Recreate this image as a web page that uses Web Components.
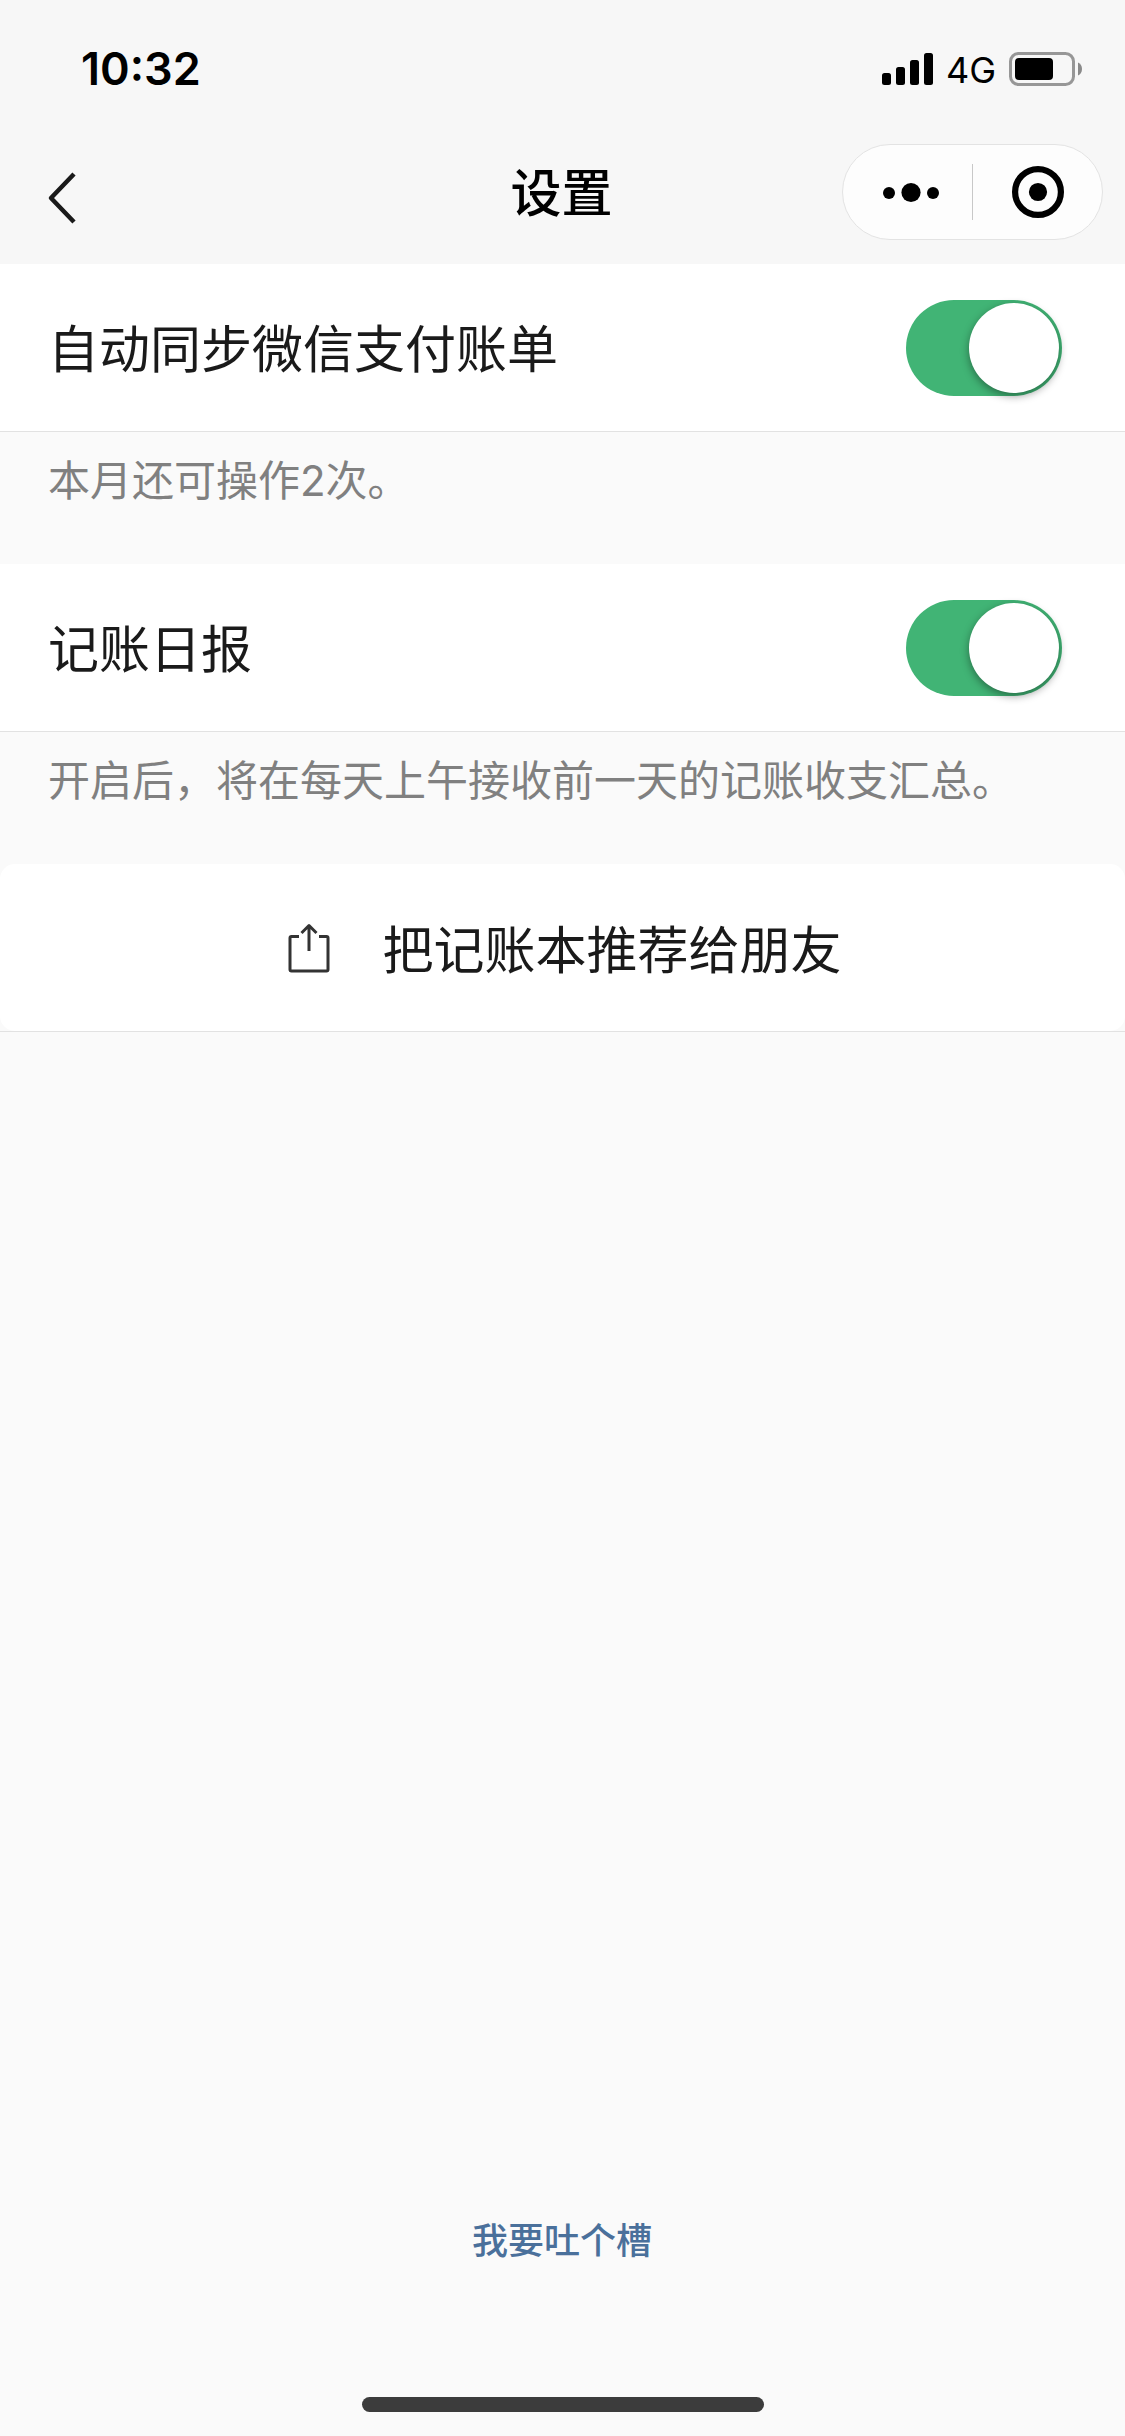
<!DOCTYPE html>
<html lang="zh-CN">
<head>
<meta charset="UTF-8">
<title>设置</title>
<style>
  html, body {
    margin: 0;
    height: 100%;
  }
  body {
    background: #fafafa;
    color: #1a1a1a;
    font-family: "Liberation Sans", "Noto Sans CJK SC", sans-serif;
    overflow: hidden;
  }
</style>
</head>
<body>
  <settings-page>
    <status-bar slot="header" time="10:32" network="4G"></status-bar>
    <nav-bar slot="header">设置</nav-bar>

    <setting-row>自动同步微信支付账单<toggle-switch slot="action" checked></toggle-switch></setting-row>
    <setting-hint>本月还可操作2次。</setting-hint>
    <setting-row>记账日报<toggle-switch slot="action" checked></toggle-switch></setting-row>
    <setting-hint>开启后，将在每天上午接收前一天的记账收支汇总。</setting-hint>
    <share-button>把记账本推荐给朋友</share-button>

    <feedback-link slot="footer">我要吐个槽</feedback-link>
    <home-indicator slot="footer"></home-indicator>
  </settings-page>

<script>
/**
 * SettingsPage
 * Full height column: header, content, footer.
 */
class SettingsPage extends HTMLElement {
  constructor() {
    super();
    this.attachShadow({ mode: "open" });
    this.shadowRoot.innerHTML = `
      <style>
        :host {
          display: flex;
          flex-direction: column;
          height: 2436px;
          background: #fafafa;
        }
        header {
          background: #f7f7f7;
        }
        main {
          flex: 1;
        }
      </style>
      <header><slot name="header"></slot></header>
      <main><slot></slot></main>
      <footer><slot name="footer"></slot></footer>
    `;
  }
}

/**
 * StatusBar
 * Clock on the left, signal, network and battery on the right.
 */
class StatusBar extends HTMLElement {
  constructor() {
    super();
    this.attachShadow({ mode: "open" });
  }

  connectedCallback() {
    const time = this.getAttribute("time") || "";
    const network = this.getAttribute("network") || "";

    this.shadowRoot.innerHTML = `
      <style>
        :host {
          display: flex;
          justify-content: space-between;
          align-items: center;
          box-sizing: border-box;
          height: 132px;
          padding: 6px 42px 0 81px;
          color: #000;
          font-family: Inter, "Liberation Sans", sans-serif;
        }
        .time {
          font-size: 45px;
          font-weight: 600;
          line-height: 60px;
        }
        .right {
          display: flex;
          align-items: center;
        }
        .network {
          margin: 2px 13px 0 13px;
          font-size: 36px;
          line-height: 44px;
        }
        svg {
          display: block;
        }
      </style>
      <span class="time">${time}</span>
      <div class="right">
        <svg width="51" height="34" viewBox="0 0 51 34">
          <rect x="0" y="21" width="9" height="12" rx="2.5"/>
          <rect x="14" y="15" width="9" height="18" rx="2.5"/>
          <rect x="28" y="8" width="9" height="25" rx="2.5"/>
          <rect x="42" y="1" width="9" height="32" rx="2.5"/>
        </svg>
        <span class="network">${network}</span>
        <svg width="74" height="34" viewBox="0 0 74 34">
          <rect x="1.5" y="1.5" width="63" height="31" rx="8" fill="none" stroke="#979797" stroke-width="3"/>
          <rect x="6" y="6" width="38" height="22" rx="4"/>
          <path d="M69 10.5C71.5 11.5 73 14 73 17s-1.500 5.500-4 6.500z" fill="#8a8a8a"/>
        </svg>
      </div>
    `;
  }
}

/**
 * NavBar
 * Back arrow, centered title and the mini program capsule.
 */
class NavBar extends HTMLElement {
  constructor() {
    super();
    this.attachShadow({ mode: "open" });
    this.shadowRoot.innerHTML = `
      <style>
        :host {
          display: grid;
          grid-template-columns: 1fr auto 1fr;
          align-items: center;
          box-sizing: border-box;
          height: 132px;
          padding: 0 22px 12px 47px;
        }
        .back {
          margin-top: 12px;
          justify-self: start;
        }
        h1 {
          margin: 6px 0 0 -27px;
          color: #000;
          font-size: 51px;
          font-weight: 500;
          line-height: 72px;
        }
        .capsule {
          display: flex;
          align-items: center;
          justify-self: end;
          box-sizing: border-box;
          width: 261px;
          height: 96px;
          border: 1px solid #e3e3e3;
          border-radius: 48px;
          background: #fdfdfd;
        }
        svg {
          display: block;
        }
      </style>
      <svg class="back" width="30" height="54" viewBox="0 0 30 54">
        <path d="M27 3L4 27l23 24" fill="none" stroke="#1a1a1a" stroke-width="4.500" stroke-linejoin="round"/>
      </svg>
      <h1><slot></slot></h1>
      <div class="capsule">
        <svg width="259" height="94" viewBox="0 0 259 94">
          <circle cx="46" cy="48" r="6"/>
          <circle cx="68" cy="47.500" r="9.600"/>
          <circle cx="90" cy="48" r="6"/>
          <path d="M129.500 19v56" stroke="#c8c8c8"/>
          <circle cx="195" cy="47" r="22.900" fill="none" stroke="#000" stroke-width="6.200"/>
          <circle cx="195" cy="47" r="9.100"/>
        </svg>
      </div>
    `;
  }
}

/**
 * ToggleSwitch
 */
class ToggleSwitch extends HTMLElement {
  constructor() {
    super();
    this.attachShadow({ mode: "open" });
    this.shadowRoot.innerHTML = `
      <style>
        :host {
          display: flex;
          box-sizing: border-box;
          width: 156px;
          height: 96px;
          padding: 3px;
          border-radius: 48px;
          background: #dfdfdf;
        }
        :host([checked]) {
          justify-content: flex-end;
          background: #41b475;
        }
        .knob {
          width: 90px;
          height: 90px;
          border-radius: 50%;
          background: #fff;
          box-shadow: 0 3px 9px rgba(0, 0, 0, 0.4);
        }
      </style>
      <div class="knob"></div>
    `;
  }

  connectedCallback() {
    this.onclick = () => this.toggleAttribute("checked");
  }
}

/**
 * SettingRow
 * Label in the default slot, control in the "action" slot.
 */
class SettingRow extends HTMLElement {
  constructor() {
    super();
    this.attachShadow({ mode: "open" });
    this.shadowRoot.innerHTML = `
      <style>
        :host {
          display: flex;
          align-items: center;
          justify-content: space-between;
          box-sizing: border-box;
          height: 168px;
          padding: 0 63px 0 48px;
          border-bottom: 1px solid #e2e2e2;
          background: #fff;
          font-size: 51px;
          line-height: 72px;
        }
        .label {
          padding-top: 6px;
        }
      </style>
      <div class="label"><slot></slot></div>
      <slot name="action"></slot>
    `;
  }
}

/**
 * SettingHint
 * Gray explanation under a row.
 */
class SettingHint extends HTMLElement {
  constructor() {
    super();
    this.attachShadow({ mode: "open" });
    this.shadowRoot.innerHTML = `
      <style>
        :host {
          display: block;
          box-sizing: border-box;
          height: 132px;
          padding: 19px 48px 0;
          color: #808080;
          font-family: Inter, "Noto Sans CJK SC", sans-serif;
          font-size: 42px;
          line-height: 60px;
        }
      </style>
      <slot></slot>
    `;
  }
}

/**
 * ShareButton
 */
class ShareButton extends HTMLElement {
  constructor() {
    super();
    this.attachShadow({ mode: "open" });
    this.shadowRoot.innerHTML = `
      <style>
        :host {
          display: block;
          border-bottom: 1px solid #e2e2e2;
        }
        .button {
          display: flex;
          align-items: center;
          justify-content: center;
          gap: 52px;
          height: 167px;
          padding-left: 5px;
          border-radius: 15px;
          background: #fff;
          font-size: 51px;
          line-height: 72px;
        }
        .label {
          padding-top: 8px;
        }
        svg {
          display: block;
        }
      </style>
      <div class="button">
        <svg width="42" height="50" viewBox="0 0 42 50" fill="none" stroke="#333" stroke-width="3">
          <path d="M11 13.500H3.500a1.500 1.500 0 0 0-1.500 1.500v31.500A1.500 1.500 0 0 0 3.500 48h35a1.500 1.500 0 0 0 1.500-1.500V15a1.500 1.500 0 0 0-1.500-1.500H31"/>
          <path d="M21 28V2.500M13.500 10L21 2.500l7.500 7.500" stroke-linejoin="round"/>
        </svg>
        <div class="label"><slot></slot></div>
      </div>
    `;
  }
}

/**
 * FeedbackLink
 */
class FeedbackLink extends HTMLElement {
  constructor() {
    super();
    this.attachShadow({ mode: "open" });
    this.shadowRoot.innerHTML = `
      <style>
        :host {
          display: block;
          padding: 0 1px 130px 0;
          color: #4a709b;
          font-size: 36px;
          font-weight: 500;
          line-height: 50px;
          text-align: center;
        }
      </style>
      <slot></slot>
    `;
  }
}

/**
 * HomeIndicator
 */
class HomeIndicator extends HTMLElement {
  constructor() {
    super();
    this.attachShadow({ mode: "open" });
    this.shadowRoot.innerHTML = `
      <style>
        :host {
          display: block;
          width: 402px;
          height: 15px;
          margin: 0 auto 24px;
          border-radius: 8px;
          background: #3c3c3c;
        }
      </style>
    `;
  }
}

// Register components
customElements.define("settings-page", SettingsPage);
customElements.define("status-bar", StatusBar);
customElements.define("nav-bar", NavBar);
customElements.define("toggle-switch", ToggleSwitch);
customElements.define("setting-row", SettingRow);
customElements.define("setting-hint", SettingHint);
customElements.define("share-button", ShareButton);
customElements.define("feedback-link", FeedbackLink);
customElements.define("home-indicator", HomeIndicator);
</script>
</body>
</html>
